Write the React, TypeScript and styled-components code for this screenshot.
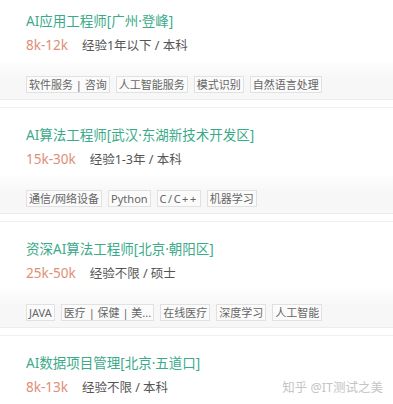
import React from "react";
import styled, { createGlobalStyle } from "styled-components";

const Global = createGlobalStyle`
  html, body { margin: 0; padding: 0; background: #fff; }
  body { font-family: "Noto Sans", "Noto Sans CJK SC", sans-serif; }
`;

const Page = styled.div`
  width: 393px;
  height: 404px;
  overflow: hidden;
  position: relative;
  background: #fff;
`;

const Card = styled.div`
  display: flex;
  flex-direction: column;
  padding-bottom: 6px;
`;

const Header = styled.div`
  height: 62px;
  box-sizing: border-box;
  padding: 11px 0 0 26px;
  display: flex;
  flex-direction: column;
  gap: 4px;
`;

const Title = styled.div`
  font-size: 13.5px;
  line-height: 20px;
  color: #3aaa8a;
  white-space: nowrap;
`;

const Meta = styled.div`
  display: flex;
  align-items: baseline;
  gap: 14px;
  line-height: 20px;
`;

const Salary = styled.span`
  font-size: 13.5px;
  color: #e08e76;
`;

const Req = styled.span`
  font-size: 12.5px;
  color: #555;
`;

const Band = styled.div`
  height: 38px;
  box-sizing: border-box;
  padding: 14px 0 0 26px;
  background: linear-gradient(#fdfdfd, #f7f7f7 45%);
  border-bottom: 1px solid #ececec;
  display: flex;
  gap: 6px;
  align-items: flex-start;
`;

const Tag = styled.span<{ $spaced?: boolean }>`
  height: 17px;
  box-sizing: border-box;
  padding: 0 2px;
  border: 1px solid #e1e1e1;
  background: #fbfbfb;
  font-size: 11px;
  line-height: 15px;
  color: #666;
  white-space: nowrap;
  letter-spacing: ${(p) => (p.$spaced ? "1.5px" : "0")};
`;

const Divider = styled.div`
  margin-top: 7px;
  height: 1px;
  background: #efefef;
`;

const Watermark = styled.div`
  position: absolute;
  right: 10px;
  bottom: 7px;
  font-size: 12.5px;
  line-height: 18px;
  color: #c4c4c4;
  white-space: nowrap;
`;

type Job = { title: string; salary: string; req: string; tags?: string[] };

const jobs: Job[] = [
  {
    title: "AI应用工程师[广州·登峰]",
    salary: "8k-12k",
    req: "经验1年以下 / 本科",
    tags: ["软件服务 | 咨询", "人工智能服务", "模式识别", "自然语言处理"],
  },
  {
    title: "AI算法工程师[武汉·东湖新技术开发区]",
    salary: "15k-30k",
    req: "经验1-3年 / 本科",
    tags: ["通信/网络设备", "Python", "C/C++", "机器学习"],
  },
  {
    title: "资深AI算法工程师[北京·朝阳区]",
    salary: "25k-50k",
    req: "经验不限 / 硕士",
    tags: ["JAVA", "医疗 | 保健 | 美...", "在线医疗", "深度学习", "人工智能"],
  },
  {
    title: "AI数据项目管理[北京·五道口]",
    salary: "8k-13k",
    req: "经验不限 / 本科",
  },
];

export default function App() {
  return (
    <Page>
      <Global />
      {jobs.map((j) => (
        <Card key={j.title}>
          <Header>
            <Title>{j.title}</Title>
            <Meta>
              <Salary>{j.salary}</Salary>
              <Req>{j.req}</Req>
            </Meta>
          </Header>
          {j.tags && (
            <>
              <Band>
                {j.tags.map((t) => (
                  <Tag key={t} $spaced={t === "C/C++"}>
                    {t}
                  </Tag>
                ))}
              </Band>
              <Divider />
            </>
          )}
        </Card>
      ))}
      <Watermark>知乎 @IT测试之美</Watermark>
    </Page>
  );
}
